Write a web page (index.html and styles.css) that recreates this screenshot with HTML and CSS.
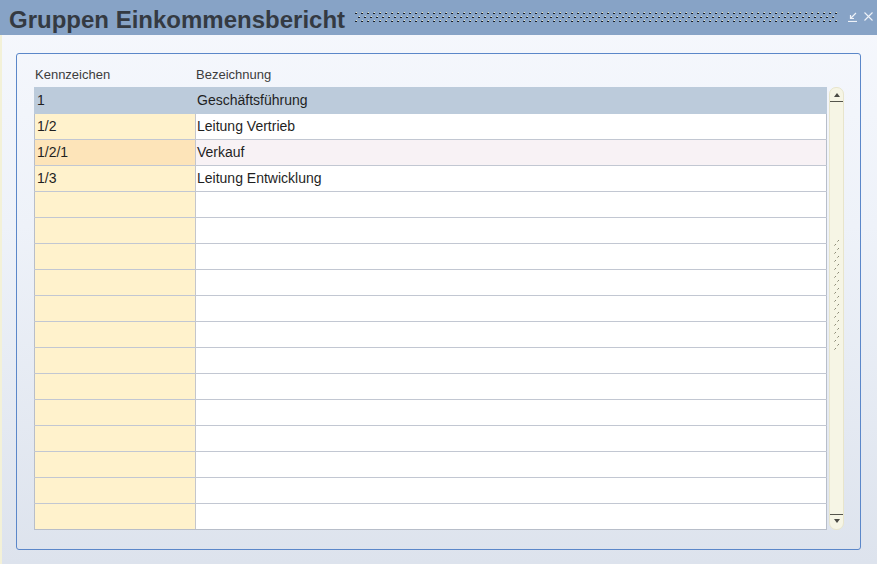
FILE: index.html
```html
<!DOCTYPE html>
<html lang="de">
<head>
<meta charset="utf-8">
<title>Gruppen Einkommensbericht</title>
<link rel="stylesheet" href="styles.css">
</head>
<body>
<div class="window">
  <div class="titlebar">
    <h1 class="title">Gruppen Einkommensbericht</h1>
    <svg class="grip" height="10" aria-hidden="true">
      <defs>
        <pattern id="tdots" width="6" height="10" patternUnits="userSpaceOnUse">
          <rect x="1" y="0" width="1" height="1" fill="#ece6c2"/>
          <rect x="0" y="1" width="2" height="1" fill="#1a202a"/>
          <rect x="4" y="4" width="1" height="1" fill="#ece6c2"/>
          <rect x="3" y="5" width="2" height="1" fill="#1a202a"/>
          <rect x="1" y="8" width="1" height="1" fill="#ece6c2"/>
          <rect x="0" y="9" width="2" height="1" fill="#1a202a"/>
        </pattern>
      </defs>
      <rect x="0" y="0" width="100%" height="10" fill="url(#tdots)"/>
    </svg>
    <div class="tb-icons">
      <svg class="tb-icon" width="10" height="10" viewBox="0 0 10 10" aria-hidden="true">
        <path d="M8 1 L2.5 6.5 M2.5 3 V6.5 H6" fill="none" stroke="#eef2f8" stroke-width="1.2"/>
        <path d="M0 9.5 H9" stroke="#eef2f8" stroke-width="1.2"/>
      </svg>
      <svg class="tb-icon" width="9" height="9" viewBox="0 0 9 9" aria-hidden="true">
        <path d="M0.5 0.5 L8.5 8.5 M8.5 0.5 L0.5 8.5" stroke="#eef2f8" stroke-width="1.1"/>
      </svg>
    </div>
  </div>

  <div class="content">
    <div class="panel">
      <div class="grid-area">
        <div class="thead">
          <div class="th th1">Kennzeichen</div>
          <div class="th th2">Bezeichnung</div>
        </div>
        <div class="thead-spacer"></div>

        <div class="tbody">
          <div class="row sel"><div class="cell c1">1</div><div class="cell c2">Geschäftsführung</div></div>
          <div class="row"><div class="cell c1">1/2</div><div class="cell c2">Leitung Vertrieb</div></div>
          <div class="row hl"><div class="cell c1">1/2/1</div><div class="cell c2">Verkauf</div></div>
          <div class="row"><div class="cell c1">1/3</div><div class="cell c2">Leitung Entwicklung</div></div>
          <div class="row"><div class="cell c1"></div><div class="cell c2"></div></div>
          <div class="row"><div class="cell c1"></div><div class="cell c2"></div></div>
          <div class="row"><div class="cell c1"></div><div class="cell c2"></div></div>
          <div class="row"><div class="cell c1"></div><div class="cell c2"></div></div>
          <div class="row"><div class="cell c1"></div><div class="cell c2"></div></div>
          <div class="row"><div class="cell c1"></div><div class="cell c2"></div></div>
          <div class="row"><div class="cell c1"></div><div class="cell c2"></div></div>
          <div class="row"><div class="cell c1"></div><div class="cell c2"></div></div>
          <div class="row"><div class="cell c1"></div><div class="cell c2"></div></div>
          <div class="row"><div class="cell c1"></div><div class="cell c2"></div></div>
          <div class="row"><div class="cell c1"></div><div class="cell c2"></div></div>
          <div class="row"><div class="cell c1"></div><div class="cell c2"></div></div>
          <div class="row last"><div class="cell c1"></div><div class="cell c2"></div></div>
        </div>

        <div class="scrollbar">
          <div class="sb-up">
            <svg width="6" height="4" viewBox="0 0 6 4" aria-hidden="true"><path d="M3 0 L6 4 H0 Z" fill="#4a4a44"/></svg>
          </div>
          <div class="sb-track">
            <svg class="sb-grip" width="7" height="110" aria-hidden="true">
              <defs>
                <pattern id="sdots" width="7" height="8" patternUnits="userSpaceOnUse">
                  <rect x="5" y="0" width="1" height="1" fill="#8c8a78"/>
                  <rect x="4" y="1" width="1" height="1" fill="#b4b29e"/>
                  <rect x="2" y="4" width="1" height="1" fill="#8c8a78"/>
                  <rect x="1" y="5" width="1" height="1" fill="#b4b29e"/>
                </pattern>
              </defs>
              <rect x="0" y="0" width="7" height="110" fill="url(#sdots)"/>
            </svg>
          </div>
          <div class="sb-down">
            <svg width="6" height="4" viewBox="0 0 6 4" aria-hidden="true"><path d="M0 0 H6 L3 4 Z" fill="#4a4a44"/></svg>
          </div>
        </div>
      </div>
    </div>
  </div>
</div>
</body>
</html>
```

FILE: styles.css
```css
html, body {
  margin: 0;
  padding: 0;
}

body {
  width: 877px;
  height: 564px;
  overflow: hidden;
  font-family: "Liberation Sans", Arial, sans-serif;
  background: linear-gradient(#f6f8fd 0%, #eef2f9 40%, #dde3ed 100%);
}

.window {
  display: flex;
  flex-direction: column;
  height: 564px;
}

/* ---------- title bar ---------- */
.titlebar {
  height: 35px;
  box-sizing: border-box;
  background: #87a3c6;
  display: flex;
  align-items: flex-start;
  padding: 0 4px 0 9px;
}

.title {
  flex-shrink: 0;
  margin: 8px 0 0;
  font-size: 24px;
  line-height: 24px;
  font-weight: bold;
  color: #343a42;
}

.grip {
  flex: 1;
  min-width: 0;
  height: 10px;
  margin: 12px 0 0 10px;
}

.tb-icons {
  display: flex;
  align-items: flex-start;
  gap: 6px;
  margin: 12px 0 0 10px;
}

.tb-icon {
  display: block;
}

/* ---------- content ---------- */
.content {
  flex: 1;
  border-left: 2px solid #f3f1d8;
  padding: 18px 16px 14px 14px;
}

.panel {
  height: 497px;
  box-sizing: border-box;
  border: 1px solid #5b87c9;
  border-radius: 3px;
  padding: 0 16px 19px 17px;
}

.grid-area {
  display: grid;
  grid-template-columns: 793px 15px;
  grid-template-rows: 33px 443px;
  column-gap: 2px;
}

/* header */
.thead {
  display: flex;
  align-items: flex-end;
  padding-bottom: 5px;
  box-sizing: border-box;
  font-size: 13px;
  line-height: 15px;
  color: #3d3d3d;
}

.th1 {
  width: 162px;
  padding-left: 1px;
  box-sizing: border-box;
}

.th2 {
  flex: 1;
  padding-left: 0;
}

/* body rows */
.tbody {
  display: flex;
  flex-direction: column;
}

.row {
  display: flex;
  height: 26px;
  box-sizing: border-box;
  border-bottom: 1px solid #c2c7d2;
}

.row.last {
  border-bottom-color: #b8bec9;
}

.cell {
  font-size: 14px;
  line-height: 25px;
  color: #1f1f1f;
  white-space: nowrap;
  box-sizing: border-box;
}

.c1 {
  width: 162px;
  border-left: 1px solid #b8bec9;
  border-right: 1px solid #c4c6cc;
  background: #fff2cc;
  padding-left: 2px;
}

.c2 {
  flex: 1;
  border-right: 1px solid #b8bec9;
  background: #ffffff;
  padding-left: 1px;
}

.row.sel {
  height: 27px;
  border-top: 1px solid #bccbdb;
  border-bottom-color: #bccbdb;
}

.row.sel .cell {
  background: #bccbdb;
  border-color: #bccbdb;
}

.row.hl .c1 {
  background: #fde4b9;
}

.row.hl .c2 {
  background: #f8f2f5;
}

/* scrollbar */
.scrollbar {
  display: flex;
  flex-direction: column;
  box-sizing: border-box;
  height: 443px;
  background: #f6f5e5;
  border: 1px solid #e8e5cc;
  border-radius: 7px;
}

.sb-up {
  height: 14px;
  box-sizing: border-box;
  border-bottom: 1px solid #55554c;
  display: flex;
  justify-content: center;
  align-items: center;
  padding-top: 1px;
}

.sb-up svg,
.sb-down svg {
  display: block;
}

.sb-track {
  flex: 1;
  padding: 138px 0 0 3px;
}

.sb-grip {
  display: block;
}

.sb-down {
  height: 15px;
  box-sizing: border-box;
  border-top: 1px solid #55554c;
  display: flex;
  justify-content: center;
  align-items: center;
  padding-bottom: 2px;
}
```
